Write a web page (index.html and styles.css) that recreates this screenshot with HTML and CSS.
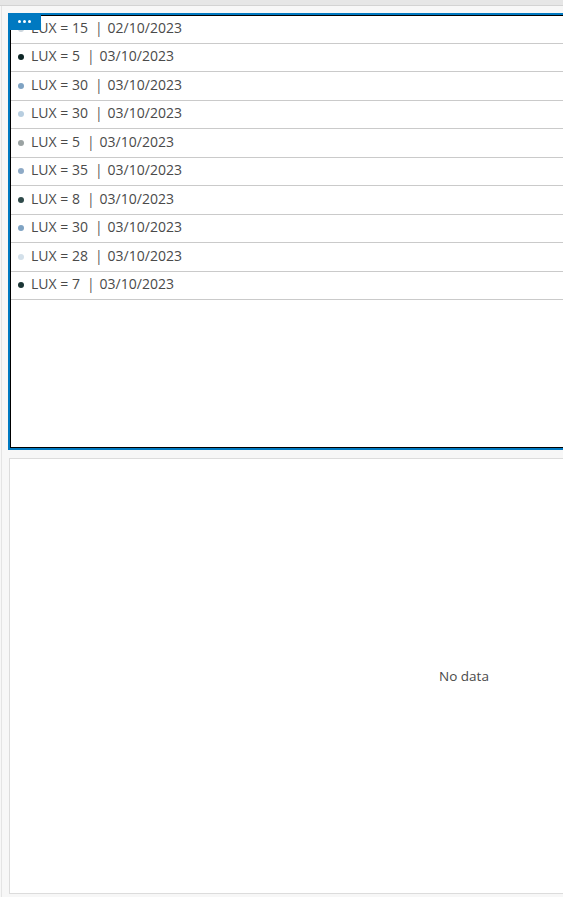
FILE: index.html
```html
<!DOCTYPE html>
<html>
<head>
<meta charset="utf-8">
<link rel="stylesheet" href="styles.css">
</head>
<body>
<div class="topbar"></div>
<div class="canvas">
  <div class="widget">
    <div class="tab"><span class="tdot"></span><span class="tdot"></span><span class="tdot"></span></div>
    <ul class="list">
      <li class="row"><span class="dot c1"></span><span>LUX = 15</span><span class="pipe">|</span><span>02/10/2023</span></li>
      <li class="row"><span class="dot c2"></span><span>LUX = 5</span><span class="pipe">|</span><span>03/10/2023</span></li>
      <li class="row"><span class="dot c3"></span><span>LUX = 30</span><span class="pipe">|</span><span>03/10/2023</span></li>
      <li class="row"><span class="dot c4"></span><span>LUX = 30</span><span class="pipe">|</span><span>03/10/2023</span></li>
      <li class="row"><span class="dot c5"></span><span>LUX = 5</span><span class="pipe">|</span><span>03/10/2023</span></li>
      <li class="row"><span class="dot c6"></span><span>LUX = 35</span><span class="pipe">|</span><span>03/10/2023</span></li>
      <li class="row"><span class="dot c7"></span><span>LUX = 8</span><span class="pipe">|</span><span>03/10/2023</span></li>
      <li class="row"><span class="dot c3"></span><span>LUX = 30</span><span class="pipe">|</span><span>03/10/2023</span></li>
      <li class="row"><span class="dot c8"></span><span>LUX = 28</span><span class="pipe">|</span><span>03/10/2023</span></li>
      <li class="row"><span class="dot c9"></span><span>LUX = 7</span><span class="pipe">|</span><span>03/10/2023</span></li>
    </ul>
  </div>
  <div class="panel">
    <span class="nodata">No data</span>
  </div>
</div>
</body>
</html>
```
FILE: styles.css
```css
html, body {
  margin: 0;
  padding: 0;
}
body {
  background: #f7f7f7;
  overflow: hidden;
  font-family: "Open Sans", "Liberation Sans", sans-serif;
  width: 563px;
  height: 897px;
}
.topbar {
  height: 5px;
  background: #e6e6e6;
  border-bottom: 1px solid #d3d3d3;
}
.canvas {
  margin-left: 1px;
  border-left: 1px solid #e4e4e4;
  padding: 7px 0 0 6px;
  height: 891px;
  box-sizing: border-box;
  overflow: hidden;
}
.widget {
  position: relative;
  box-sizing: border-box;
  width: 911px;
  height: 437px;
  border: 2px solid #0079c1;
  background: #fff;
  box-shadow: inset 0 0 0 1px #000;
}
.tab {
  position: absolute;
  left: -2px;
  top: -2px;
  width: 33px;
  height: 17px;
  background: #0079c1;
  display: flex;
  align-items: center;
  justify-content: center;
  gap: 2px;
  padding-bottom: 1px;
  box-sizing: border-box;
  z-index: 2;
}
.tdot {
  width: 3px;
  height: 3px;
  border-radius: 50%;
  background: #fff;
}
.list {
  list-style: none;
  margin: 0;
  padding: 0 0 0 1px;
}
.row {
  box-sizing: border-box;
  height: 28.5px;
  border-bottom: 1px solid #cacaca;
  display: flex;
  align-items: center;
  padding: 0 0 3px 7px;
  font-size: 14px;
  color: #4a4a4a;
  white-space: nowrap;
}
.dot {
  width: 6px;
  height: 6px;
  border-radius: 50%;
  margin: 3px 7px 0 0;
  flex: none;
}
.pipe {
  margin: 0 5px 0 7px;
  color: #5a5a5a;
}
.c1 { background: #cbd5dc; }
.c2 { background: #0d2626; }
.c3 { background: #7fa3c3; }
.c4 { background: #b8cee0; }
.c5 { background: #9ba3a3; }
.c6 { background: #8eaac6; }
.c7 { background: #2f4a4a; }
.c8 { background: #d3e0ea; }
.c9 { background: #1a3535; }
.panel {
  box-sizing: border-box;
  margin: 8px 0 0 1px;
  width: 910px;
  height: 436px;
  border: 1px solid #dcdcdc;
  background: #fff;
  display: flex;
  align-items: center;
  justify-content: center;
}
.nodata {
  font-size: 13.5px;
  color: #4a4a4a;
}
```
